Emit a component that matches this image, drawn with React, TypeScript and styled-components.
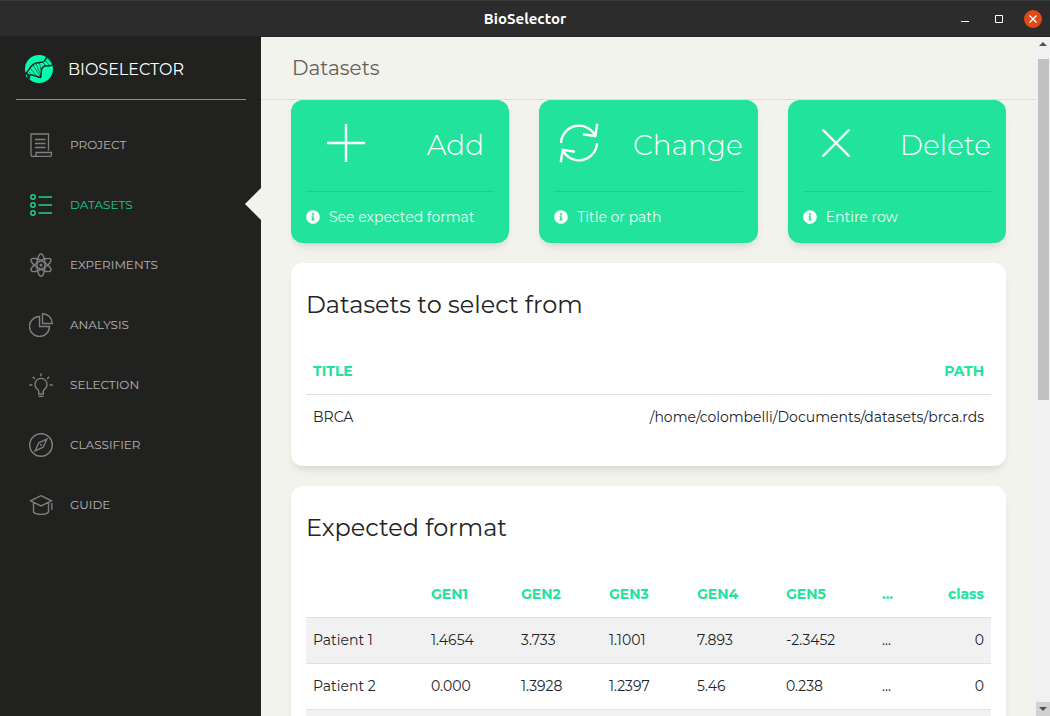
import React from "react";
import styled, { createGlobalStyle } from "styled-components";
import { FaInfoCircle } from "react-icons/fa";

const green = "#22e39c";
const sans = `Montserrat, "Open Sans", sans-serif`;

const GlobalStyle = createGlobalStyle`
  *, *::before, *::after { box-sizing: border-box; }
  body { margin: 0; background: #f4f3ef; font: 400 14px/21px ${sans}; color: #212529; overflow: hidden; }
  button { font: inherit; color: inherit; background: none; border: 0; padding: 0; cursor: pointer; }
`;

const Window = styled.div`
  display: grid;
  grid-template-rows: 37px minmax(0, 1fr);
  height: 100vh;
`;

const TitleBar = styled.header`
  display: grid;
  grid-template-columns: 1fr auto 1fr;
  align-items: center;
  background: #2c2c2c;
  border-top: 1px solid #3a3a3a;
  border-bottom: 1px solid #242424;
  color: #fff;
`;

const WindowTitle = styled.span`
  grid-column: 2;
  font: 700 15px/20px Ubuntu, "Noto Sans", sans-serif;
`;

const WindowControls = styled.div`
  display: flex;
  justify-content: flex-end;
  align-items: center;
  gap: 16px;
  padding-right: 8px;
`;

const WindowButton = styled.button<{ $close?: boolean }>`
  display: flex;
  width: 18px;
  height: 18px;
  border-radius: 50%;
  background: ${(p) => (p.$close ? "#e2491a" : "transparent")};
`;

const Body = styled.div`
  display: grid;
  grid-template-columns: 261px minmax(0, 1fr) 14px;
  min-height: 0;
`;

const Sidebar = styled.aside`
  background: #212120;
  color: #fff;
`;

const Brand = styled.a`
  display: flex;
  align-items: center;
  gap: 14px;
  height: 63px;
  margin: 0 15px 0 16px;
  padding: 2px 0 0 8px;
  border-bottom: 1px solid #8f8f8f;
  color: #fff;
  font-size: 16px;
  text-decoration: none;
`;

const Nav = styled.nav`
  display: flex;
  flex-direction: column;
  padding-top: 15px;
`;

const NavLink = styled.a<{ $active?: boolean }>`
  position: relative;
  display: flex;
  align-items: center;
  gap: 17px;
  height: 60px;
  padding-left: 29px;
  color: ${(p) => (p.$active ? green : "#fff")};
  font-size: 12px;
  text-decoration: none;
  text-transform: uppercase;

  svg { opacity: ${(p) => (p.$active ? 0.9 : 0.42)}; }
  span { padding-bottom: 2px; opacity: ${(p) => (p.$active ? 0.85 : 0.65)}; }

  &::after {
    content: "";
    display: ${(p) => (p.$active ? "block" : "none")};
    position: absolute;
    right: 0;
    top: 13px;
    border: 16px solid transparent;
    border-left-width: 0;
    border-right-color: #f3f3ed;
  }
`;

const Main = styled.main`
  overflow-y: auto;
  scrollbar-width: none;
  background: #f3f3ed;
`;

const PageHeader = styled.div`
  display: flex;
  align-items: center;
  height: 63px;
  padding: 0 31px;
  border-bottom: 1px solid #dddddb;
`;

const PageTitle = styled.h1`
  margin: 0;
  color: #66615b;
  font: 400 20px/30px ${sans};
`;

const Content = styled.div`
  display: flex;
  flex-direction: column;
  gap: 20px;
  padding: 0 30px 20px;
`;

const Actions = styled.div`
  display: grid;
  grid-template-columns: repeat(3, minmax(0, 1fr));
  gap: 30px;
`;

const ActionCard = styled.button`
  display: flex;
  flex-direction: column;
  height: 143px;
  padding: 15px;
  border-radius: 12px;
  background: ${green};
  box-shadow: 0 6px 10px -4px rgba(0, 0, 0, 0.15);
  color: #fff;
  text-align: left;
`;

const ActionTop = styled.span`
  display: flex;
  align-items: center;
  align-self: stretch;
  height: 77px;
  padding-bottom: 20px;
  border-bottom: 1px solid #20cd8d;
`;

const ActionIcon = styled.span`
  display: flex;
  flex: 1;
  justify-content: center;
`;

const ActionName = styled.span`
  flex: none;
  min-width: 108px;
  padding: 3px 0 0 30px;
  font: 300 28px/40px ${sans};
  text-align: center;
`;

const ActionHint = styled.span`
  display: flex;
  align-items: center;
  gap: 9px;
  padding-top: 15px;

  svg { margin-bottom: 1px; }
`;

const HintText = styled.span`
  opacity: 0.9;
`;

const Card = styled.section`
  padding: 15px 15px 26px;
  border-radius: 12px;
  background: #fff;
  box-shadow: 0 6px 10px -4px rgba(0, 0, 0, 0.15);
`;

const CardTitle = styled.h2`
  margin: 0;
  padding: 9px 0 26px;
  font: 400 24px/36px ${sans};
  color: #252422;
`;

const Table = styled.table<{ $striped?: boolean }>`
  width: 100%;
  table-layout: ${(p) => (p.$striped ? "fixed" : "auto")};
  border-collapse: collapse;

  th, td { padding: 12px 7px; text-align: left; white-space: nowrap; }
  th { color: ${green}; font-weight: 700; }
  th:last-child, td:last-child { text-align: right; }
  td { border-top: 1px solid #dee2e6; }
  tbody tr:nth-child(odd) { background: ${(p) => (p.$striped ? "#f1f1f1" : "transparent")}; }
`;

const Column = styled.col<{ $width: number }>`
  width: ${(p) => p.$width}px;
`;

const ScrollBar = styled.div`
  display: grid;
  grid-template-rows: 14px minmax(0, 1fr) 14px;
  background: #f1f1f1;
`;

const ScrollButton = styled.button<{ $pressed?: boolean }>`
  display: flex;
  align-items: center;
  justify-content: center;
  background: ${(p) => (p.$pressed ? "#d2d2d2" : "transparent")};
`;

const ScrollTrack = styled.div`
  padding: 8px 1px 0 2px;
`;

const ScrollThumb = styled.div`
  height: 53%;
  background: #c1c1c1;
`;

const Glyph = ({ size = 24, width = 1, children }: { size?: number; width?: number; children: React.ReactNode }) => (
  <svg width={size} height={size} viewBox={`0 0 ${size} ${size}`} fill="none" stroke="currentColor" strokeWidth={width} aria-hidden="true">
    {children}
  </svg>
);

const Logo = () => (
  <svg width="30" height="30" viewBox="0 0 30 30" fill="none" aria-hidden="true">
    <circle cx="15" cy="15" r="14" fill="#00ffae" />
    <path d="M0 19L4 19L6.500 24L2 27Z" fill="#212120" />
    <path d="M1.500 20.500l2 .5l.5 2.500l-1.500-.5z" fill="#00ffae" />
    <path d="M0 20C5 18.500 4.500 14 9.500 10.200C14 7.200 17 9.500 20 7.500C22 6 22 4.500 23 1.500" stroke="#212120" strokeWidth="1.500" />
    <path d="M3 22C8 19 11 22.500 16.500 23.500C18 20 16 16 18.800 13.200C21.500 10 25 14 30 10" stroke="#212120" strokeWidth="1.500" />
    <path d="M9 11L16.500 23M12 9.500L16.700 21M15.500 9L17.300 17.500M6.500 14.500L12 21.500M5 18L7.500 20.500M21.500 6.500L26 12M23 4L29 10.500M19 8.500L21.500 11.500" stroke="#212120" strokeWidth=".6" />
  </svg>
);

const icons = {
  project: (
    <Glyph width={1.3}>
      <path d="M19.500 17.500V1H2v20.500a2 2 0 0 0 2 2h16.500a2 2 0 0 0 2-2v-2H7v2a2 2 0 0 1-3 1.700M6 6.500h10.500M6 10.500h10.500M6 14.500h10.500" />
    </Glyph>
  ),
  datasets: (
    <Glyph width={1.5}>
      <circle cx="4" cy="4" r="2.200" /><circle cx="4" cy="12" r="2.200" /><circle cx="4" cy="20" r="2.200" />
      <path d="M9.500 4H23M9.500 12H23M9.500 20H23" />
    </Glyph>
  ),
  experiments: (
    <Glyph width={1.4}>
      <ellipse cx="12" cy="12" rx="4" ry="11.300" />
      <ellipse cx="12" cy="12" rx="4" ry="11.300" transform="rotate(60 12 12)" />
      <ellipse cx="12" cy="12" rx="4" ry="11.300" transform="rotate(120 12 12)" />
      <circle cx="12" cy="12" r="1.500" fill="currentColor" stroke="none" />
    </Glyph>
  ),
  analysis: (
    <Glyph width={1.4}>
      <path d="M10.500 3.500a10 10 0 1 0 10 10h-10zM13.500 .7v9.800h9.800A9.800 9.800 0 0 0 13.500 .7z" />
    </Glyph>
  ),
  selection: (
    <Glyph width={1.4}>
      <path d="M9.700 21v-2.800c0-1-.5-1.300-1.300-2a6 6 0 1 1 7.200 0c-.8.700-1.300 1-1.300 2V21zM9.300 21h5.400M9.300 23.400h5.400M12 .3v3M.3 12h3M20.700 12h3M3.800 3.800l2.100 2.100M20.200 3.800l-2.100 2.100" />
    </Glyph>
  ),
  classifier: (
    <Glyph width={1.4}>
      <circle cx="12" cy="12" r="11.300" />
      <path d="M17.800 6.200L9.800 9.800L6.200 17.800L14.200 14.200Z" /><circle cx="12" cy="12" r=".4" />
    </Glyph>
  ),
  guide: (
    <Glyph width={1.4}>
      <path d="M12 2.700L22.500 7.800L12 13L1.500 7.800ZM4.500 9.500V19c1.500 1.600 4 2.400 7.500 2.400s6-.8 7.500-2.400V9.500M22.800 10v6.800" />
    </Glyph>
  ),
};

const nav: { id: keyof typeof icons; label: string }[] = [
  { id: "project", label: "Project" },
  { id: "datasets", label: "Datasets" },
  { id: "experiments", label: "Experiments" },
  { id: "analysis", label: "Analysis" },
  { id: "selection", label: "Selection" },
  { id: "classifier", label: "Classifier" },
  { id: "guide", label: "Guide" },
];

const actions = [
  { name: "Add", hint: "See expected format", icon: <path d="M20 1v38M1 20h38" /> },
  {
    name: "Change",
    hint: "Title or path",
    icon: <path d="M2 20A18 18 0 0 1 36.500 13.500M24 11.300L36.300 13.200L38.200 .8M38 20A18 18 0 0 1 3.500 26.500M16 28.700L3.700 26.800L1.800 39.200" />,
  },
  { name: "Delete", hint: "Entire row", icon: <path d="M6.500 6.500l27 27M33.500 6.500l-27 27" /> },
];

const heads = ["", "GEN1", "GEN2", "GEN3", "GEN4", "GEN5", "...", "class"];
const widths = [118, 90, 88, 88, 89, 96, 50, 66];
const patients = [
  ["Patient 1", "1.4654", "3.733", "1.1001", "7.893", "-2.3452", "...", "0"],
  ["Patient 2", "0.000", "1.3928", "1.2397", "5.46", "0.238", "...", "0"],
  ["Patient 3", "1.2043", "2.114", "0.9821", "6.02", "-1.127", "...", "1"],
];

export default function App() {
  return (
    <Window>
      <GlobalStyle />
      <TitleBar>
        <WindowTitle>BioSelector</WindowTitle>
        <WindowControls>
          <WindowButton aria-label="Minimize"><Glyph size={18}><path d="M5 11.500h8" /></Glyph></WindowButton>
          <WindowButton aria-label="Maximize"><Glyph size={18}><path d="M5.500 5.500h7v7h-7z" /></Glyph></WindowButton>
          <WindowButton aria-label="Close" $close><Glyph size={18} width={1.4}><path d="M5.500 5.500l7 7M12.500 5.500l-7 7" /></Glyph></WindowButton>
        </WindowControls>
      </TitleBar>
      <Body>
        <Sidebar>
          <Brand href="#"><Logo />BIOSELECTOR</Brand>
          <Nav>
            {nav.map((item) => (
              <NavLink key={item.id} href={`#${item.id}`} $active={item.id === "datasets"}>
                {icons[item.id]}
                <span>{item.label}</span>
              </NavLink>
            ))}
          </Nav>
        </Sidebar>
        <Main>
          <PageHeader><PageTitle>Datasets</PageTitle></PageHeader>
          <Content>
            <Actions>
              {actions.map((a) => (
                <ActionCard key={a.name}>
                  <ActionTop>
                    <ActionIcon><Glyph size={40} width={2.4}>{a.icon}</Glyph></ActionIcon>
                    <ActionName>{a.name}</ActionName>
                  </ActionTop>
                  <ActionHint><FaInfoCircle size={14} /><HintText>{a.hint}</HintText></ActionHint>
                </ActionCard>
              ))}
            </Actions>
            <Card>
              <CardTitle>Datasets to select from</CardTitle>
              <Table>
                <thead><tr><th>TITLE</th><th>PATH</th></tr></thead>
                <tbody><tr><td>BRCA</td><td>/home/colombelli/Documents/datasets/brca.rds</td></tr></tbody>
              </Table>
            </Card>
            <Card>
              <CardTitle>Expected format</CardTitle>
              <Table $striped>
                <colgroup>{widths.map((w, i) => <Column key={i} $width={w} />)}</colgroup>
                <thead><tr>{heads.map((h) => <th key={h}>{h}</th>)}</tr></thead>
                <tbody>
                  {patients.map((row) => (
                    <tr key={row[0]}>{row.map((cell, i) => <td key={i}>{cell}</td>)}</tr>
                  ))}
                </tbody>
              </Table>
            </Card>
          </Content>
        </Main>
        <ScrollBar>
          <ScrollButton aria-label="Scroll up"><svg width="8" height="4"><path d="M0 4L4 0L8 4Z" fill="#505050" /></svg></ScrollButton>
          <ScrollTrack><ScrollThumb /></ScrollTrack>
          <ScrollButton aria-label="Scroll down" $pressed><svg width="8" height="4"><path d="M0 0L4 4L8 0Z" fill="#505050" /></svg></ScrollButton>
        </ScrollBar>
      </Body>
    </Window>
  );
}
